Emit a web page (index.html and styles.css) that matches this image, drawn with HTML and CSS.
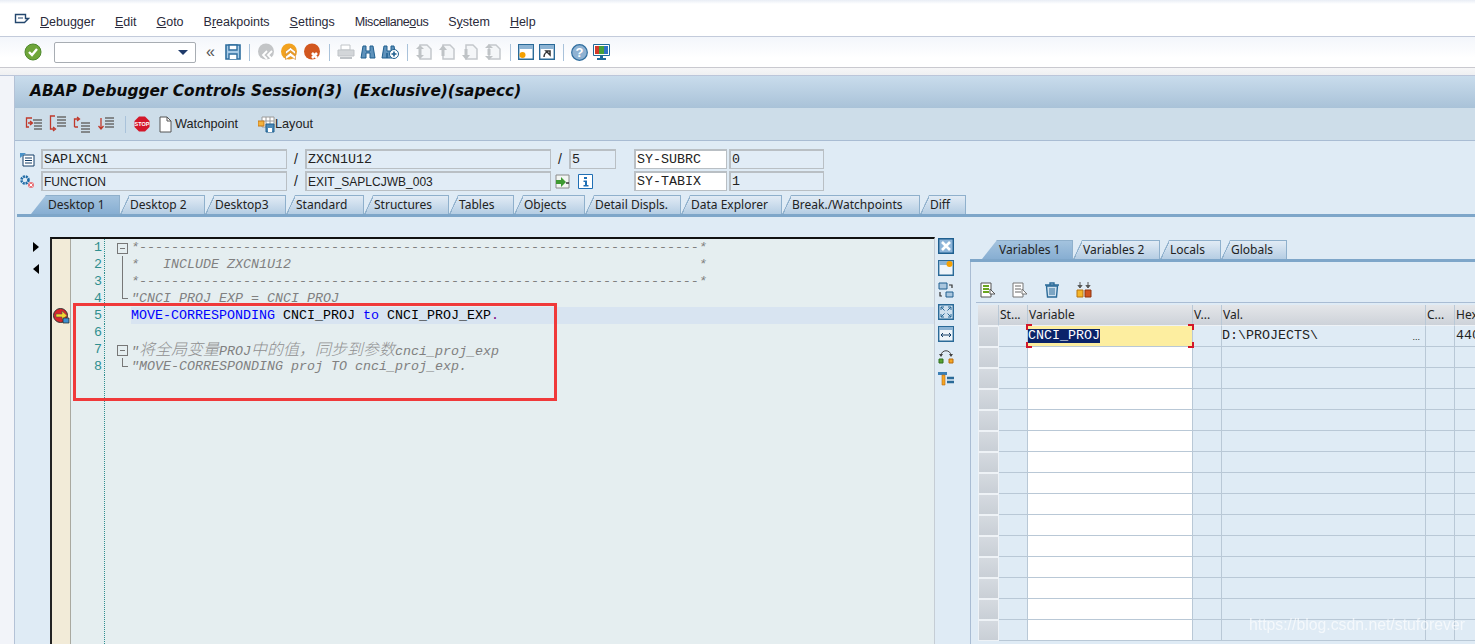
FILE: index.html
```html
<!DOCTYPE html>
<html lang="en">
<head>
    <meta charset="UTF-8">
    <title>ABAP Debugger</title>
    <link rel="stylesheet" href="styles.css">
</head>
<body>
    <svg class="defs" width="0" height="0">
        <symbol id="page-gray" viewBox="0 0 18 18"><path d="M5 2h7l4 4v10H5z" fill="#f4f6f8" stroke="#c4c8cc" stroke-width="1.5"/></symbol>
    </svg>

    <div class="menubar">
        <svg class="menu-icon" width="16" height="14" viewBox="0 0 16 14"><path d="M1.500 1.500h10v4h3l-4 4h-9z" fill="none" stroke="#24476e" stroke-width="1.400"/><path d="M4 5h5" stroke="#24476e"/></svg>
        <span class="menu-item"><u>D</u>ebugger</span>
        <span class="menu-item"><u>E</u>dit</span>
        <span class="menu-item"><u>G</u>oto</span>
        <span class="menu-item">B<u>r</u>eakpoints</span>
        <span class="menu-item"><u>S</u>ettings</span>
        <span class="menu-item narrow">Miscellane<u>o</u>us</span>
        <span class="menu-item">S<u>y</u>stem</span>
        <span class="menu-item"><u>H</u>elp</span>
    </div>

    <div class="toolbar">
        <svg class="tb tb-check" width="18" height="18" viewBox="0 0 18 18"><circle cx="9" cy="9" r="8" fill="#6fa53a" stroke="#4e8a2c"/><path d="M5 9l3 3 5-6" fill="none" stroke="#fff" stroke-width="2.400"/></svg>
        <div class="combo"><span class="combo-arrow"></span></div>
        <span class="chev">«</span>
        <svg class="tb" width="16" height="16" viewBox="0 0 16 16"><path d="M1 1h14v14H1z" fill="#a9cbe6" stroke="#2f6e9f" stroke-width="1.600"/><path d="M4 1h8v5H4zM4 15v-5h8v5" fill="#fff" stroke="#2f6e9f" stroke-width="1.400"/></svg>
        <span class="sep"></span>
        <svg class="tb" width="18" height="18" viewBox="0 0 18 18"><circle cx="9" cy="8.500" r="8" fill="#c3c5c7"/><path d="M10 8l-4 4 4 4M15 8l-4 4 4 4" fill="none" stroke="#fff" stroke-width="1.800"/></svg>
        <svg class="tb" width="18" height="18" viewBox="0 0 18 18"><circle cx="9" cy="8.500" r="8" fill="#f2a21f"/><path d="M5.500 8.500l5-4 5 4v3l-5-4-5 4zM5.500 13.500l5-4 5 4v3l-5-3-5 3z" fill="#fff" stroke="#c9781a" stroke-width=".6"/></svg>
        <svg class="tb" width="18" height="18" viewBox="0 0 18 18"><circle cx="9" cy="8.500" r="8" fill="#d2571f"/><path d="M9 10l5 5M14 10l-5 5" stroke="#fff" stroke-width="2.600"/></svg>
        <span class="sep"></span>
        <svg class="tb" width="18" height="16" viewBox="0 0 18 16"><path d="M4 1h9v5H4z" fill="#fff" stroke="#c0c4c8"/><path d="M1 6h16v6H1z" fill="#d3d6d9" stroke="#bfc3c7"/><path d="M3 14h12" stroke="#bfc3c7" stroke-width="2"/></svg>
        <svg class="tb" width="16" height="16" viewBox="0 0 16 16"><path d="M3 2h3v5h4V2h3l2 12h-5V9H6v5H1z" fill="#5f92bb" stroke="#1f5f8f"/></svg>
        <svg class="tb" width="18" height="16" viewBox="0 0 18 16"><path d="M3 2h3v5h4V2h3l1 6-3 6H6V9v5H1z" fill="#5f92bb" stroke="#1f5f8f"/><circle cx="13" cy="10" r="4.500" fill="#fff" stroke="#1f5f8f"/><path d="M10.500 10h5M13 7.500v5" stroke="#1f5f8f" stroke-width="1.600"/></svg>
        <span class="sep"></span>
        <svg class="tb" width="18" height="18"><use href="#page-gray"/><path d="M5 2l4 4H1zM5 16l4-4H1z" fill="#bfc3c6"/><path d="M3.500 6h3v6h-3z" fill="#bfc3c6"/></svg>
        <svg class="tb" width="18" height="18"><use href="#page-gray"/><path d="M5 2l4 5H1z" fill="#bfc3c6"/><path d="M3.500 7h3v6h-3z" fill="#bfc3c6"/></svg>
        <svg class="tb" width="18" height="18"><use href="#page-gray"/><path d="M5 17l4-5H1z" fill="#bfc3c6"/><path d="M3.500 6h3v6h-3z" fill="#bfc3c6"/></svg>
        <svg class="tb" width="18" height="18"><use href="#page-gray"/><path d="M5 1l4 4H1zM5 17l4-4H1z" fill="#bfc3c6"/><path d="M3.500 6h3v6h-3z" fill="#bfc3c6"/></svg>
        <span class="sep"></span>
        <svg class="tb" width="16" height="16" viewBox="0 0 16 16"><path d="M.7.700h14.600v14.600H.7z" fill="#fff" stroke="#2a6a98" stroke-width="1.400"/><path d="M1 1h14v4H1z" fill="#8db4d4"/><circle cx="4.500" cy="11" r="3" fill="#f5a000"/></svg>
        <svg class="tb" width="16" height="16" viewBox="0 0 16 16"><path d="M.7.700h14.600v14.600H.7z" fill="#fff" stroke="#2a6a98" stroke-width="1.400"/><path d="M1 1h14v4H1z" fill="#8db4d4"/><path d="M5 13c0-3 2-5 4-5M7 7h4v4z" fill="none" stroke="#333" stroke-width="1.500"/></svg>
        <span class="sep"></span>
        <svg class="tb" width="17" height="17" viewBox="0 0 17 17"><circle cx="8.500" cy="8.500" r="7.800" fill="#8fb2d2" stroke="#2f6e9f" stroke-width="1.200"/><text class="help-mark" x="8.500" y="13">?</text></svg>
        <svg class="tb" width="17" height="17" viewBox="0 0 17 17"><path d="M.5.500h16v11H.5z" fill="#fff" stroke="#1f6a9a"/><path d="M2 2h4v8H2z" fill="#d23a2a"/><path d="M6 2h5v8H6z" fill="#46a03a"/><path d="M11 2h4v8h-4z" fill="#2f72c4"/><path d="M7 12h3v2h3v2H4v-2h3z" fill="#1f6a9a"/></svg>
    </div>

    <div class="strip"></div>

    <div class="main">
        <div class="title">ABAP Debugger Controls Session(3)&nbsp; (Exclusive)(sapecc)</div>

        <div class="app-tools">
            <svg class="at" width="18" height="16" viewBox="0 0 18 16"><path d="M7 2H1.500v9H4M3 7h4M5 5l2.500 2L5 9" fill="none" stroke="#c0392b" stroke-width="1.300"/><path d="M8 4h9M9 7h8M9 10h8M9 13h8" stroke="#6b6b6b" stroke-width="1.600"/></svg>
            <svg class="at" width="18" height="18" viewBox="0 0 18 18"><path d="M6 1H1.500v13H5M4 12l2.500 2L4 16" fill="none" stroke="#c0392b" stroke-width="1.300"/><path d="M8 2h9M8 5h9M8 8h9M8 11h9" stroke="#6b6b6b" stroke-width="1.600"/></svg>
            <svg class="at" width="18" height="17" viewBox="0 0 18 17"><path d="M1.500 11V3H6M4 1l2.500 2L4 5M1.500 11H5" fill="none" stroke="#c0392b" stroke-width="1.300"/><path d="M8 7h9M8 10h9M8 13h9M8 16h9" stroke="#6b6b6b" stroke-width="1.600"/></svg>
            <svg class="at" width="18" height="16" viewBox="0 0 18 16"><path d="M4 2v10M1.500 10L4 13l2.500-3" fill="none" stroke="#c0392b" stroke-width="1.300"/><path d="M8 2h9M8 5h9M8 8h9M8 11h9" stroke="#6b6b6b" stroke-width="1.600"/></svg>
            <span class="sep"></span>
            <svg class="at" width="16" height="16" viewBox="0 0 16 16"><path d="M5 .5h6L15.500 5v6L11 15.500H5L.5 11V5z" fill="#d3172a"/><text class="stop-mark" x="8" y="10">STOP</text></svg>
            <svg class="at at-doc" width="13" height="17" viewBox="0 0 13 17"><path d="M1 1h7l4 4v11H1z" fill="#fff" stroke="#555"/><path d="M8 1v4h4" fill="none" stroke="#555"/></svg>
            <span class="at-label">Watchpoint</span>
            <svg class="at at-layout" width="17" height="17" viewBox="0 0 17 17"><path d="M4 1h12v10H4zM8 1v10M12 1v10M4 5h12" fill="#fff" stroke="#9a9a9a"/><path d="M0 5h6v5H0z" fill="#f3b23c" stroke="#c77a1a"/><path d="M8 8h8v8H8z" fill="#4d8bb8" stroke="#1f5f8f"/><path d="M10 12h4v4h-4z" fill="#fff"/></svg>
            <span class="at-label">Layout</span>
        </div>

        <div class="content">
            <div class="fields">
                <div class="field-row">
                    <svg class="field-icon" width="16" height="15" viewBox="0 0 16 15"><path d="M4 3h11v11H4z" fill="#fff" stroke="#123d66"/><path d="M1 1l6 0-6 5z" fill="#4a93c9"/><path d="M6 6h7M6 8.500h7M6 11h7" stroke="#123d66"/></svg>
                    <span class="field fld-name mono">SAPLXCN1</span>
                    <span class="slash">/</span>
                    <span class="field fld-name mono">ZXCN1U12</span>
                    <span class="slash">/</span>
                    <span class="field fld-line mono">5</span>
                    <span class="field sys-name mono">SY-SUBRC</span>
                    <span class="field sys-val mono">0</span>
                </div>
                <div class="field-row">
                    <svg class="field-icon" width="16" height="15" viewBox="0 0 16 15"><circle cx="6" cy="6" r="3.500" fill="none" stroke="#1f6aa5" stroke-width="2.600" stroke-dasharray="2 .8"/><circle cx="12" cy="11" r="3" fill="#e8747a"/><path d="M10.500 9.500l3 3M13.500 9.500l-3 3" stroke="#fff"/></svg>
                    <span class="field fld-name">FUNCTION</span>
                    <span class="slash">/</span>
                    <span class="field fld-name">EXIT_SAPLCJWB_003</span>
                    <svg class="insert-icon" width="15" height="15" viewBox="0 0 15 15"><path d="M1 1h13v13H1z" fill="#f3f6f3" stroke="#8a8a8a"/><path d="M1 6h5V3l5 5-5 5v-3H1z" fill="#3f9a32"/><path d="M11 9h3" stroke="#333" stroke-width="1.500"/></svg>
                    <svg class="info-icon" width="15" height="15" viewBox="0 0 15 15"><path d="M.5.500h14v14H.5z" fill="#fff" stroke="#1f6fb5"/><path d="M6 3h3v2H6zM5.500 6.500H9V11h1.500v1.500h-5V11H7V8H5.500z" fill="#1f6fb5"/></svg>
                    <span class="field sys-name mono">SY-TABIX</span>
                    <span class="field sys-val mono">1</span>
                </div>
            </div>

            <div class="tabs main-tabs">
                <span class="tab active w88">Desktop 1</span>
                <span class="tab w85">Desktop 2</span>
                <span class="tab w81">Desktop3</span>
                <span class="tab w78">Standard</span>
                <span class="tab w85">Structures</span>
                <span class="tab w64">Tables</span>
                <span class="tab w71">Objects</span>
                <span class="tab w96">Detail Displs.</span>
                <span class="tab w101">Data Explorer</span>
                <span class="tab w138">Break./Watchpoints</span>
                <span class="tab w46">Diff</span>
            </div>

            <div class="panel">
                <div class="arrows">
                    <span class="arrow-right"></span>
                    <span class="arrow-left"></span>
                </div>

                <div class="editor">
                    <div class="line"><span class="marker"></span><span class="num">1</span><span class="fold box"></span><span class="code cmt">*----------------------------------------------------------------------*</span></div>
                    <div class="line"><span class="marker"></span><span class="num">2</span><span class="fold mid"></span><span class="code cmt">*   INCLUDE ZXCN1U12                                                   *</span></div>
                    <div class="line"><span class="marker"></span><span class="num">3</span><span class="fold mid"></span><span class="code cmt">*----------------------------------------------------------------------*</span></div>
                    <div class="line"><span class="marker"></span><span class="num">4</span><span class="fold end"></span><span class="code cmt">"CNCI_PROJ_EXP = CNCI_PROJ</span></div>
                    <div class="line">
                        <span class="marker"><svg class="stop-here" width="17" height="16" viewBox="0 0 17 16"><circle cx="7.500" cy="7.500" r="7" fill="#d8262c" stroke="#333"/><path d="M3 6h6V3l5 4.500L9 12V9H3z" fill="#f5d430" stroke="#555" stroke-width=".6"/><path d="M10 10h6v5h-6z" fill="#3d8fd0" stroke="#222" stroke-width=".7"/></svg></span>
                        <span class="num">5</span><span class="fold"></span>
                        <span class="code current"><span class="kw">MOVE-CORRESPONDING</span> CNCI_PROJ <span class="kw">to</span> CNCI_PROJ_EXP<span class="dot">.</span></span>
                    </div>
                    <div class="line"><span class="marker"></span><span class="num">6</span><span class="fold"></span><span class="code"></span></div>
                    <div class="line"><span class="marker"></span><span class="num">7</span><span class="fold box"></span><span class="code cmt">"<span class="cjk">将全局变量</span>PROJ<span class="cjk">中的值，同步到参数</span>cnci_proj_exp</span></div>
                    <div class="line"><span class="marker"></span><span class="num">8</span><span class="fold end"></span><span class="code cmt">"MOVE-CORRESPONDING proj TO cnci_proj_exp.</span></div>
                    <div class="line filler"><span class="marker"></span><span class="num"></span></div>
                </div>

                <div class="side-icons">
                    <svg width="16" height="16" viewBox="0 0 16 16"><path d="M.7.700h14.600v14.600H.7z" fill="#8db4d8" stroke="#1f5f8f" stroke-width="1.400"/><path d="M4 4l8 8M12 4l-8 8" stroke="#fff" stroke-width="2.600"/></svg>
                    <svg width="16" height="16" viewBox="0 0 16 16"><path d="M.7.700h14.600v14.600H.7z" fill="#eef4f9" stroke="#2a6a98" stroke-width="1.400"/><path d="M1 1h14v4H1z" fill="#8db4d4"/><circle cx="11.500" cy="4" r="3" fill="#f5a000"/></svg>
                    <svg width="16" height="16" viewBox="0 0 16 16"><path d="M1 1h8v6H1z" fill="#a9c6de" stroke="#1f5f8f"/><path d="M8 10h7v5H8z" fill="#a9c6de" stroke="#1f5f8f"/><path d="M11 3h3v3M4 14H2v-4" fill="none" stroke="#333" stroke-width="1.200"/></svg>
                    <svg width="16" height="16" viewBox="0 0 16 16"><path d="M.7.700h14.600v14.600H.7z" fill="#cfe0ee" stroke="#2a6a98" stroke-width="1.400"/><path d="M3 6V3h3M13 6V3h-3M3 10v3h3M13 10v3h-3M3 3l3.500 3.500M13 3L9.500 6.500M3 13l3.500-3.500M13 13L9.500 9.500" fill="none" stroke="#2a6a98"/></svg>
                    <svg width="16" height="16" viewBox="0 0 16 16"><path d="M.7.700h14.600v14.600H.7z" fill="#eef4f9" stroke="#2a6a98" stroke-width="1.400"/><path d="M1 1h14v3H1z" fill="#8db4d4"/><path d="M3 9h10M5 7L3 9l2 2M11 7l2 2-2 2" fill="none" stroke="#123d66"/></svg>
                    <svg width="16" height="16" viewBox="0 0 16 16"><path d="M3 8C3 1 13 1 13 8" fill="none" stroke="#444"/><path d="M1 6l2 3 2-3M11 6l2 3 2-3" fill="#444"/><path d="M1 11h4v4H1z" fill="#5aa332" stroke="#2f6e1f"/><path d="M11 11h4v4h-4z" fill="#f5a623" stroke="#b86a10"/></svg>
                    <svg width="16" height="16" viewBox="0 0 16 16"><path d="M0 2h9v3H0z" fill="#3b7fb5"/><path d="M4 5h3v10H4z" fill="#f5a623" stroke="#b86a10" stroke-width=".6"/><path d="M9 8h7M9 12h7" stroke="#2a6a98" stroke-width="2.400"/></svg>
                </div>

                <div class="vars">
                    <div class="tabs var-tabs">
                        <span class="tab active w91">Variables 1</span>
                        <span class="tab w86">Variables 2</span>
                        <span class="tab w61">Locals</span>
                        <span class="tab w66">Globals</span>
                    </div>
                    <div class="var-body">
                        <div class="var-tools">
                            <svg width="16" height="16" viewBox="0 0 16 16"><path d="M1 1h10v14H1z" fill="#fff" stroke="#555"/><path d="M3 4h6M3 7h6M3 10h6" stroke="#6aa51f" stroke-width="2"/><path d="M10 7l5 5h-5z" fill="#fff" stroke="#555"/></svg>
                            <svg width="16" height="16" viewBox="0 0 16 16"><path d="M1 1h10v14H1z" fill="#fff" stroke="#777"/><path d="M3 4h6M3 7h6M3 10h6" stroke="#999" stroke-width="1.500"/><path d="M10 7l5 5h-5z" fill="#fff" stroke="#777"/></svg>
                            <svg width="16" height="16" viewBox="0 0 16 16"><path d="M1 3h14M6 3V1h4v2" fill="none" stroke="#2a6a98" stroke-width="1.400"/><path d="M2.500 4h11l-1 11h-9z" fill="#cfe0ee" stroke="#2a6a98" stroke-width="1.400"/><path d="M6 6v7M8 6v7M10 6v7" stroke="#2a6a98"/></svg>
                            <svg width="16" height="16" viewBox="0 0 16 16"><path d="M4 0v4M1.800 3L4 6l2.200-3M12 0v4M9.800 3L12 6l2.200-3" fill="#555" stroke="#555"/><path d="M1 8h6v7H1z" fill="#f5b62a" stroke="#b8720f"/><path d="M9 8h6v7H9z" fill="#d2541f" stroke="#8f3510"/></svg>
                        </div>
                        <div class="grid">
                            <div class="grid-head">
                                <span class="sel"></span><span class="c-st">St...</span><span class="c-var">Variable</span><span class="c-v">V...</span><span class="c-val">Val.</span><span class="c-c">C...</span><span class="c-hex">Hex</span>
                            </div>
                            <div class="grid-row">
                                <span class="sel"></span><span class="c-st"></span>
                                <span class="c-var focused mono"><span class="picked">CNCI_PROJ</span><i class="mark tl"></i><i class="mark tr"></i><i class="mark bl"></i><i class="mark br"></i></span>
                                <span class="c-v"></span>
                                <span class="c-val mono">D:\PROJECTS\<span class="more">...</span></span>
                                <span class="c-c"></span><span class="c-hex mono">440</span>
                            </div>
                            <div class="grid-row"><span class="sel"></span><span class="c-st"></span><span class="c-var blank"></span><span class="c-v"></span><span class="c-val"></span><span class="c-c"></span><span class="c-hex"></span></div>
                            <div class="grid-row"><span class="sel"></span><span class="c-st"></span><span class="c-var blank"></span><span class="c-v"></span><span class="c-val"></span><span class="c-c"></span><span class="c-hex"></span></div>
                            <div class="grid-row"><span class="sel"></span><span class="c-st"></span><span class="c-var blank"></span><span class="c-v"></span><span class="c-val"></span><span class="c-c"></span><span class="c-hex"></span></div>
                            <div class="grid-row"><span class="sel"></span><span class="c-st"></span><span class="c-var blank"></span><span class="c-v"></span><span class="c-val"></span><span class="c-c"></span><span class="c-hex"></span></div>
                            <div class="grid-row"><span class="sel"></span><span class="c-st"></span><span class="c-var blank"></span><span class="c-v"></span><span class="c-val"></span><span class="c-c"></span><span class="c-hex"></span></div>
                            <div class="grid-row"><span class="sel"></span><span class="c-st"></span><span class="c-var blank"></span><span class="c-v"></span><span class="c-val"></span><span class="c-c"></span><span class="c-hex"></span></div>
                            <div class="grid-row"><span class="sel"></span><span class="c-st"></span><span class="c-var blank"></span><span class="c-v"></span><span class="c-val"></span><span class="c-c"></span><span class="c-hex"></span></div>
                            <div class="grid-row"><span class="sel"></span><span class="c-st"></span><span class="c-var blank"></span><span class="c-v"></span><span class="c-val"></span><span class="c-c"></span><span class="c-hex"></span></div>
                            <div class="grid-row"><span class="sel"></span><span class="c-st"></span><span class="c-var blank"></span><span class="c-v"></span><span class="c-val"></span><span class="c-c"></span><span class="c-hex"></span></div>
                            <div class="grid-row"><span class="sel"></span><span class="c-st"></span><span class="c-var blank"></span><span class="c-v"></span><span class="c-val"></span><span class="c-c"></span><span class="c-hex"></span></div>
                            <div class="grid-row"><span class="sel"></span><span class="c-st"></span><span class="c-var blank"></span><span class="c-v"></span><span class="c-val"></span><span class="c-c"></span><span class="c-hex"></span></div>
                            <div class="grid-row"><span class="sel"></span><span class="c-st"></span><span class="c-var blank"></span><span class="c-v"></span><span class="c-val"></span><span class="c-c"></span><span class="c-hex"></span></div>
                            <div class="grid-row"><span class="sel"></span><span class="c-st"></span><span class="c-var blank"></span><span class="c-v"></span><span class="c-val"></span><span class="c-c"></span><span class="c-hex"></span></div>
                            <div class="grid-row"><span class="sel"></span><span class="c-st"></span><span class="c-var blank"></span><span class="c-v"></span><span class="c-val"></span><span class="c-c"></span><span class="c-hex"></span></div>
                        </div>
                    </div>
                </div>
            </div>
        </div>
    </div>

    <div class="redbox"></div>
    <div class="watermark">https://blog.csdn.net/stuforever</div>
</body>
</html>
```

FILE: styles.css
```css
* {
box-sizing: border-box;
}

html, body {
margin: 0;
height: 644px;
overflow: hidden;
}

body {
position: relative;
display: flex;
flex-direction: column;
background: #f2f4f9;
font-family: "Liberation Sans", Arial, sans-serif;
font-size: 12.5px;
color: #222;
}

.defs {
position: absolute;
}

.mono {
font-family: "Liberation Mono", "Noto Sans CJK SC", monospace;
font-size: 13.33px;
}

/* menu */
.menubar {
height: 37px;
flex: none;
display: flex;
align-items: center;
padding: 8px 0 0 14px;
background: linear-gradient(#e9edf5 0, #fff 4px);
border-bottom: 1px solid #c3cbdb;
}

.menu-icon {
margin-right: 10px;
margin-top: -4px;
}

.menu-item {
margin-right: 20px;
color: #2a2a3a;
}

.menu-item.narrow {
letter-spacing: -0.45px;
}

/* system toolbar */
.toolbar {
height: 31px;
flex: none;
display: flex;
align-items: center;
padding-left: 24px;
background: linear-gradient(#f3f6fb, #fff 70%);
border-bottom: 1px solid #c9c9cf;
}

.tb {
margin-right: 5px;
flex: none;
}

.tb-check {
margin-right: 12px;
}

.combo {
width: 142px;
height: 21px;
margin-right: 10px;
background: #fff;
border: 1px solid #a8adb3;
border-radius: 2px;
position: relative;
}

.combo-arrow {
position: absolute;
right: 7px;
top: 7px;
border-left: 5px solid transparent;
border-right: 5px solid transparent;
border-top: 5px solid #1f3a6a;
}

.chev {
width: 14px;
margin-right: 5px;
color: #555;
font-size: 16px;
line-height: 16px;
}

.sep {
width: 1px;
height: 17px;
margin: 0 7px 0 3px;
background: #a9c2da;
flex: none;
}

.help-mark {
font: bold 13px "Liberation Sans", sans-serif;
fill: #fff;
text-anchor: middle;
}

.strip {
height: 8px;
flex: none;
background: linear-gradient(#f6f6f7, #eff0f2);
border-bottom: 1px solid #bcc6da;
}

/* main area */
.main {
flex: 1;
min-height: 0;
margin-left: 14px;
display: flex;
flex-direction: column;
border-left: 1px solid #b4c2d6;
background: #dfebf5;
}

.title {
height: 32px;
flex: none;
padding: 4px 0 0 15px;
background: linear-gradient(#c9dcec, #a9c2d8);
font: italic bold 15.4px/22px "DejaVu Sans", sans-serif;
color: #0b0b0b;
white-space: pre;
}

.app-tools {
height: 33px;
flex: none;
display: flex;
align-items: center;
padding-left: 10px;
background: #cddde9;
border-bottom: 1px solid #a9bcd3;
}

.at {
margin-right: 6px;
flex: none;
}

.app-tools .sep {
margin: 0 8px 0 4px;
}

.at-doc {
margin: 0 3px 0 3px;
}

.at-layout {
margin: 0 0 0 20px;
}

.at-label {
font-size: 12.7px;
color: #222;
}

.stop-mark {
font: bold 5.500px "Liberation Sans", sans-serif;
fill: #fff;
text-anchor: middle;
}

.content {
flex: 1;
min-height: 0;
display: flex;
flex-direction: column;
}

/* fields */
.fields {
padding: 8px 0 0 4px;
flex: none;
display: flex;
flex-direction: column;
gap: 2px;
}

.field-row {
height: 20px;
display: flex;
align-items: center;
}

.field-icon {
width: 16px;
margin-right: 6px;
flex: none;
}

.field {
height: 20px;
padding-left: 1px;
line-height: 18px;
font-size: 12px;
background: #e1ecf6;
border: 2px solid #b9bfc4;
border-width: 2px 1px 1px 2px;
white-space: nowrap;
overflow: hidden;
}

.field.mono {
font-size: 13.33px;
line-height: 17px;
}

.fld-name {
width: 246px;
}

.fld-line {
width: 47px;
margin-right: 18px;
}

.sys-name {
width: 93px;
margin-right: 2px;
background: #fff;
}

.sys-val {
width: 95px;
}

.slash {
width: 18px;
text-align: center;
font-size: 14px;
}

.insert-icon {
margin: 0 8px 0 4px;
flex: none;
}

.info-icon {
margin-right: 41px;
flex: none;
}

/* tabs */
.tabs {
display: flex;
flex: none;
height: 22px;
border-bottom: 3px solid #7ea6c9;
}

.main-tabs {
margin: 4px 0 0 2px;
padding-left: 14px;
}

.tab {
height: 19px;
padding-left: 10px;
line-height: 19px;
font-family: "Noto Sans", "Liberation Sans", sans-serif;
font-size: 12px;
color: #222;
white-space: nowrap;
background:
    linear-gradient(to bottom right, transparent 50%, #8fb0cc 50%, #8fb0cc calc(50% + 1.2px), transparent calc(50% + 1.2px)) 0 0 / 9px 100% no-repeat,
    linear-gradient(#e4edf6, #b5cde3);
box-shadow: inset 0 1px #8fb0cc, inset -1px 0 #8fb0cc;
clip-path: polygon(0 100%, 9px 0, 100% 0, 100% 100%);
flex: none;
}

.tab.active {
padding-left: 17px;
background: linear-gradient(#a5c4df, #87aed2);
clip-path: polygon(0 100%, 15px 0, 100% 0, 100% 100%);
}

.w46 { width: 46px; }
.w61 { width: 61px; }
.w64 { width: 65px; }
.w66 { width: 66px; }
.w71 { width: 71px; }
.w78 { width: 78px; }
.w81 { width: 81px; }
.w85 { width: 85px; }
.w86 { width: 87px; }
.w88 { width: 89px; }
.w91 { width: 91px; }
.w96 { width: 96px; }
.w101 { width: 101px; }
.w138 { width: 138px; }

/* panel */
.panel {
flex: 1;
min-height: 0;
margin-left: 2px;
padding-top: 20px;
display: flex;
}

.arrows {
width: 33px;
flex: none;
padding: 5px 0 0 16px;
display: flex;
flex-direction: column;
gap: 12px;
}

.arrow-right {
width: 0;
height: 10px;
border-left: 6px solid #000;
border-top: 5px solid transparent;
border-bottom: 5px solid transparent;
}

.arrow-left {
width: 0;
height: 10px;
border-right: 6px solid #000;
border-top: 5px solid transparent;
border-bottom: 5px solid transparent;
}

/* editor */
.editor {
width: 885px;
flex: none;
display: flex;
flex-direction: column;
background: #e5eef0;
border-top: 2px solid #111;
border-left: 2px solid #222;
border-right: 1px solid #c5cdd5;
font-family: "Liberation Mono", monospace;
font-size: 13.33px;
}

.line {
height: 17px;
flex: none;
display: flex;
line-height: 17px;
white-space: pre;
}

.line.filler {
flex: 1;
}

.marker {
width: 19px;
flex: none;
background: #f2ebd8;
border-right: 1px solid #a9a9a0;
padding: 1px 0 0 1px;
}

.stop-here {
display: block;
flex: none;
}

.num {
width: 34px;
flex: none;
padding-right: 2px;
text-align: right;
color: #2f8f8f;
border-right: 1px dotted #2f8f8f;
}

.fold {
width: 26px;
flex: none;
position: relative;
}

.fold.box::before {
content: "";
position: absolute;
left: 12px;
top: 4px;
width: 9px;
height: 9px;
border: 1px solid #777;
background: linear-gradient(#777, #777) center / 5px 1px no-repeat;
}

.fold.mid::before {
content: "";
position: absolute;
left: 17px;
top: 0;
bottom: 0;
border-left: 1px solid #777;
}

.fold.end::before {
content: "";
position: absolute;
left: 17px;
top: 0;
height: 8px;
width: 5px;
border-left: 1px solid #777;
border-bottom: 1px solid #777;
}

.code {
flex: 1;
color: #000;
}

.cmt {
color: #808080;
font-style: italic;
}

.cjk {
font-family: "Noto Sans CJK SC", sans-serif;
font-size: 16px;
font-weight: 300;
line-height: 14px;
color: #909090;
}

.current {
background: #d8e4f1;
}

.kw {
color: #0000ff;
}

.dot {
color: #800080;
}

/* side icons */
.side-icons {
width: 35px;
flex: none;
padding: 1px 0 0 3px;
display: flex;
flex-direction: column;
gap: 6px;
}

/* variables */
.vars {
flex: 1;
min-width: 0;
display: flex;
flex-direction: column;
}

.var-tabs {
margin-top: 3px;
padding-left: 12px;
}

.var-body {
flex: 1;
min-height: 0;
border-left: 1px solid #a9bcd3;
}

.var-tools {
height: 40px;
padding: 20px 0 0 9px;
display: flex;
gap: 16px;
}

.grid {
margin-left: 5px;
padding: 2px 0 0 2px;
border-top: 1px solid #a9bcd3;
}

.grid-head,
.grid-row {
display: flex;
height: 21px;
white-space: nowrap;
}

.grid-head span,
.grid-row span {
flex: none;
border-right: 1px solid #b9c8d6;
border-bottom: 1px solid #b9c8d6;
padding-left: 1px;
line-height: 20px;
}

.grid-head span {
background: linear-gradient(#e4e6e9, #cdd2d9);
font-family: "Noto Sans", "Liberation Sans", sans-serif;
font-size: 12px;
border-bottom-color: #eef2f6;
}

.grid-row .picked,
.grid-row .more {
border: 0;
padding: 0;
}

.sel {
width: 21px;
}

.grid-row .sel {
background: linear-gradient(#d5dae0, #c9cfd6);
border: 1px solid #eef2f6;
}

.c-st {
width: 29px;
}

.c-var {
width: 165px;
}

.c-v {
width: 29px;
}

.c-val {
width: 204px;
position: relative;
}

.grid-row .c-val,
.grid-row .c-var {
padding-left: 0;
}

.c-c {
width: 29px;
}

.c-hex {
width: 40px;
}

.blank {
background: #fff;
}

.focused {
background: #fdeea0;
position: relative;
}

.grid-row .picked {
background: #0a246a;
color: #fff;
display: inline-block;
line-height: 14px;
}

.grid-row .more {
position: absolute;
right: 5px;
top: 1px;
font: 9px/20px "Liberation Sans", sans-serif;
}

.mark {
position: absolute;
width: 6px;
height: 6px;
border: 0 solid #d3172a;
}

.mark.tl { left: -2px; top: -2px; border-width: 2px 0 0 2px; }
.mark.tr { right: -2px; top: -2px; border-width: 2px 2px 0 0; }
.mark.bl { left: -2px; bottom: -2px; border-width: 0 0 2px 2px; }
.mark.br { right: -2px; bottom: -2px; border-width: 0 2px 2px 0; }

/* annotation drawn on top of the screenshot */
.redbox {
position: absolute;
left: 73px;
top: 303px;
width: 484px;
height: 98px;
border: 3px solid #f0393a;
}

.watermark {
position: absolute;
right: 10px;
top: 616px;
font-size: 15.8px;
color: rgba(255, 255, 255, 0.65);
filter: blur(0.4px);
}
```
